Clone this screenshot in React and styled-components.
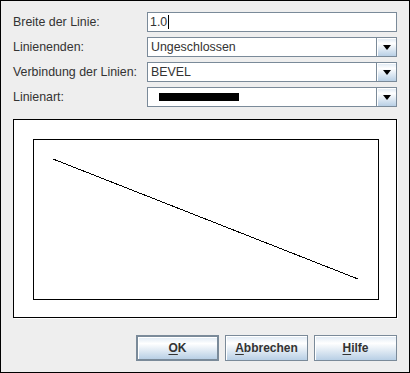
import React from 'react';
import styled, { createGlobalStyle } from 'styled-components';

const GlobalStyle = createGlobalStyle`
  html, body {
    margin: 0;
    padding: 0;
    background: #eeeeee;
  }
  * {
    box-sizing: border-box;
  }
`;

const Dialog = styled.div`
  width: 410px;
  height: 373px;
  border: 1px solid #000;
  background: #eeeeee;
  font-family: 'Liberation Sans', Arial, sans-serif;
  font-size: 12.4px;
  color: #333333;
  display: flex;
  flex-direction: column;
  padding: 11px 12px 11px 12px;
`;

const Form = styled.div`
  display: grid;
  grid-template-columns: 134px 250px;
  grid-auto-rows: 20px;
  row-gap: 5px;
  align-items: center;
`;

const Label = styled.label`
  line-height: 20px;
  white-space: nowrap;
`;

const TextField = styled.div`
  height: 20px;
  border: 1px solid #7a8a99;
  background: #fff;
  display: flex;
  align-items: center;
  padding-left: 2px;
  color: #333;
`;

const Caret = styled.span`
  display: inline-block;
  width: 1px;
  height: 14px;
  background: #000;
  margin-left: 1px;
`;

const Combo = styled.div`
  height: 20px;
  border: 1px solid #7a8a99;
  background: #fff;
  display: flex;
  align-items: stretch;
`;

const ComboValue = styled.div`
  flex: 1;
  display: flex;
  align-items: center;
  padding-left: ${(p) => (p.$indent ? '11px' : '3px')};
`;

const Swatch = styled.span`
  display: block;
  width: 80px;
  height: 8px;
  background: #000;
`;

const ArrowButton = styled.div`
  width: 20px;
  border-left: 1px solid #7a8a99;
  background: linear-gradient(#dde8f3 0%, #ffffff 30%, #b8cfe5 100%);
  display: flex;
  align-items: center;
  justify-content: center;
  box-shadow: inset 1px 1px 0 #fff;
`;

const Arrow = styled.span`
  width: 0;
  height: 0;
  border-left: 4.5px solid transparent;
  border-right: 4.5px solid transparent;
  border-top: 5px solid #000;
  margin-top: 1px;
`;

const Preview = styled.div`
  margin-top: 12px;
  height: 199px;
  border: 1px solid #000;
  box-shadow: 1px 1px 0 #fff;
  background: #fff;
  padding: 19px 17px 17px 19px;
  display: flex;
`;

const Canvas = styled.div`
  flex: 1;
  border: 1px solid #000;
  background: #fff;
  display: flex;
`;

const Buttons = styled.div`
  margin-top: auto;
  display: flex;
  justify-content: flex-end;
  gap: 6px;
`;

const Button = styled.button`
  width: 83px;
  height: 26px;
  border: ${(p) => (p.$default ? '2px' : '1px')} solid #7a8a99;
  box-shadow: inset 1px 1px 0 #fff;
  background: linear-gradient(#dde8f3 0%, #ffffff 30%, #b8cfe5 100%);
  font-family: 'Liberation Sans', Arial, sans-serif;
  font-size: 12px;
  font-weight: bold;
  color: #333;
  padding: 0;

  u {
    text-decoration: underline;
    text-underline-offset: 2px;
  }
`;

const LineArt = () => (
  <svg width="344" height="159" viewBox="0 0 344 159">
    <line x1="19" y1="19" x2="324" y2="139" stroke="#000" strokeWidth="1" shapeRendering="crispEdges" />
  </svg>
);

const App = () => {
  return (
    <Dialog>
      <GlobalStyle />
      <Form>
        <Label>Breite der Linie:</Label>
        <TextField>
          1.0<Caret />
        </TextField>

        <Label>Linienenden:</Label>
        <Combo>
          <ComboValue>Ungeschlossen</ComboValue>
          <ArrowButton>
            <Arrow />
          </ArrowButton>
        </Combo>

        <Label>Verbindung der Linien:</Label>
        <Combo>
          <ComboValue>BEVEL</ComboValue>
          <ArrowButton>
            <Arrow />
          </ArrowButton>
        </Combo>

        <Label>Linienart:</Label>
        <Combo>
          <ComboValue $indent>
            <Swatch />
          </ComboValue>
          <ArrowButton>
            <Arrow />
          </ArrowButton>
        </Combo>
      </Form>

      <Preview>
        <Canvas>
          <LineArt />
        </Canvas>
      </Preview>

      <Buttons>
        <Button $default>
          <u>O</u>K
        </Button>
        <Button>
          <u>A</u>bbrechen
        </Button>
        <Button>
          <u>H</u>ilfe
        </Button>
      </Buttons>
    </Dialog>
  );
};

export default App;
